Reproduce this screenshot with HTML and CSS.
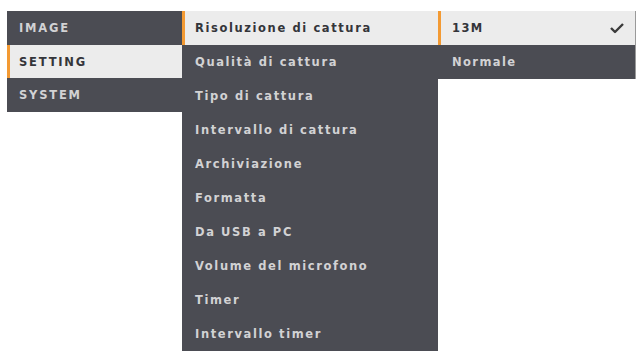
FILE: index.html
```html
<!DOCTYPE html>
<html lang="en">
<head>
    <meta charset="UTF-8">
    <title>Menu</title>
    <link rel="stylesheet" href="styles.css">
</head>
<body>
    <div class="menu">
        <ul class="col col-main">
            <li class="item">IMAGE</li>
            <li class="item active">SETTING</li>
            <li class="item">SYSTEM</li>
        </ul>

        <ul class="col col-sub">
            <li class="item active">Risoluzione di cattura</li>
            <li class="item">Qualità di cattura</li>
            <li class="item">Tipo di cattura</li>
            <li class="item">Intervallo di cattura</li>
            <li class="item">Archiviazione</li>
            <li class="item">Formatta</li>
            <li class="item">Da USB a PC</li>
            <li class="item">Volume del microfono</li>
            <li class="item">Timer</li>
            <li class="item">Intervallo timer</li>
        </ul>

        <ul class="col col-value">
            <li class="item active">
                <span>13M</span>
                <svg class="check" width="16" height="12" viewBox="0 0 16 12">
                    <polyline points="2,6 6,10 14,2" fill="none" stroke="#3a3a3a" stroke-width="2.4" stroke-linejoin="round"/>
                </svg>
            </li>
            <li class="item">Normale</li>
        </ul>
    </div>
</body>
</html>
```

FILE: styles.css
```css
:root {
    --dark: #4b4c53;
    --light: #ececec;
    --accent: #f39a33;
    --text-light: #d2d2d4;
    --text-dark: #34353a;
}

body {
    margin: 0;
    background: #ffffff;
    font-family: "DejaVu Sans", Verdana, sans-serif;
    font-weight: bold;
}

.menu {
    display: flex;
    align-items: flex-start;
    padding: 11px 0 0 7px;
}

.col {
    list-style: none;
    margin: 0;
    padding: 0;
    background: var(--dark);
}

.item {
    display: flex;
    align-items: center;
    justify-content: space-between;
    height: 34px;
    box-sizing: border-box;
    border-left: 3px solid transparent;
    color: var(--text-light);
    font-size: 11.5px;
}

.item.active {
    background: var(--light);
    color: var(--text-dark);
    border-left-color: var(--accent);
}

.col-main {
    width: 175px;
}

.col-main .item {
    padding-left: 9px;
    letter-spacing: 1.8px;
    height: 33.7px;
}

.col-sub {
    width: 256px;
}

.col-sub .item {
    padding-left: 10px;
    letter-spacing: 1.6px;
}

.col-value {
    width: 197px;
    border-right: 1px solid #9a9a9a;
}

.col-value .item {
    padding: 0 10px 0 11px;
    letter-spacing: 1.4px;
}

.check {
    display: block;
}
```
